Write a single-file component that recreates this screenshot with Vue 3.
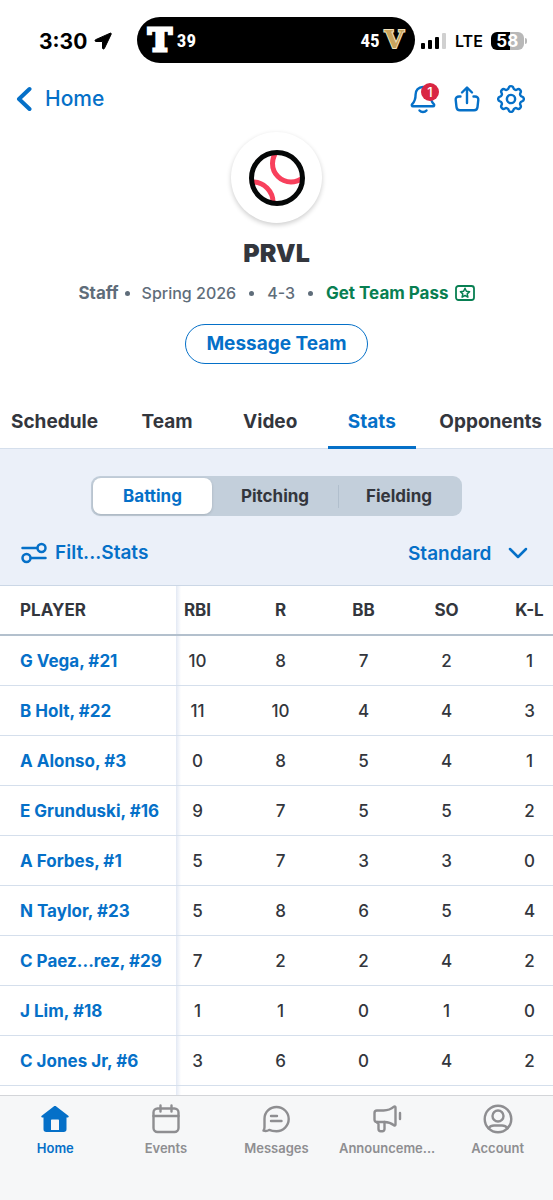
<template>
  <div class="app">
    <div class="status">
      <div class="status-left">
        <span class="clock">3:30</span>
        <svg width="18" height="18" viewBox="0 0 18 18">
          <path d="M16.2 1.2 1.6 7.7c-1 .5-.7 1.8.3 1.8h6.2c.3 0 .4.1.4.4V16c0 1.100 1.400 1.400 1.900.4L17.200 2.200c.3-.7-.3-1.300-1-1z" fill="#000" stroke="#000" stroke-width="1" stroke-linejoin="round" />
        </svg>
      </div>
      <div class="island">
        <div class="score">
          <span class="logo logo-t">T</span>
          <span>39</span>
        </div>
        <div class="score">
          <span>45</span>
          <span class="logo logo-v">V</span>
        </div>
      </div>
      <div class="status-right">
        <svg width="26" height="18" viewBox="0 0 26 18">
          <rect x="0" y="11" width="4" height="6" rx="1" />
          <rect x="7" y="8" width="4" height="9" rx="1" />
          <rect x="14" y="5" width="4" height="12" rx="1" />
          <rect x="21" y="1" width="4" height="16" rx="1" fill="#d0d0d0" />
        </svg>
        <span class="lte">LTE</span>
        <span class="battery">58</span>
      </div>
    </div>

    <header class="topbar">
      <a href="#" class="back">
        <svg width="16" height="26" viewBox="0 0 16 26">
          <path d="M13.500 3 3 13l10.500 10" fill="none" stroke="currentColor" stroke-width="4" stroke-linecap="round" stroke-linejoin="round" />
        </svg>
        Home
      </a>
      <div class="actions">
        <button class="icon-btn" aria-label="Notifications">
          <svg class="line" width="28" height="30" viewBox="0 0 28 30">
            <path d="M14 3C9.500 3 6.600 6.200 6.600 10.500c0 5-1 7.200-3.400 9.600-.8.9-.4 2.200.8 2.200h20c1.200 0 1.600-1.300.8-2.200-2.400-2.400-3.400-4.600-3.400-9.600C21.400 6.200 18.500 3 14 3z" />
            <path d="M10.500 26.500c1.800 2 5.200 2 7 0" />
          </svg>
          <span class="badge">1</span>
        </button>
        <button class="icon-btn" aria-label="Share">
          <svg class="line" width="28" height="30" viewBox="0 0 28 30">
            <path d="M14 19V4M9 8.500 14 3.500l5 5" />
            <path d="M7.500 12.500H6c-2 0-3.500 1.300-3.300 3.300l.8 7.400c.2 1.900 1.500 3.100 3.400 3.100h14.200c1.900 0 3.200-1.200 3.400-3.100l.8-7.400c.2-2-1.300-3.300-3.300-3.300h-1.500" />
          </svg>
        </button>
        <button class="icon-btn" aria-label="Settings">
          <svg width="28" height="30" viewBox="2.200 1.500 19.600 21" fill="none" stroke="currentColor" stroke-width="1.700" stroke-linejoin="round">
            <path d="M10.325 4.317c.426-1.756 2.924-1.756 3.350 0a1.724 1.724 0 0 0 2.573 1.066c1.543-.94 3.310.826 2.370 2.370a1.724 1.724 0 0 0 1.065 2.572c1.756.426 1.756 2.924 0 3.350a1.724 1.724 0 0 0-1.066 2.573c.94 1.543-.826 3.310-2.370 2.370a1.724 1.724 0 0 0-2.572 1.065c-.426 1.756-2.924 1.756-3.350 0a1.724 1.724 0 0 0-2.573-1.066c-1.543.94-3.310-.826-2.370-2.370a1.724 1.724 0 0 0-1.065-2.572c-1.756-.426-1.756-2.924 0-3.350a1.724 1.724 0 0 0 1.066-2.573c-.94-1.543.826-3.310 2.370-2.370 1 .608 2.296.07 2.572-1.065z" />
            <circle cx="12" cy="12" r="2.900" />
          </svg>
        </button>
      </div>
    </header>

    <section class="team">
      <div class="avatar">
        <svg width="56" height="56" viewBox="0 0 56 56">
          <clipPath id="ball"><circle cx="28" cy="28" r="26" /></clipPath>
          <g clip-path="url(#ball)" fill="none" stroke="#f8405c" stroke-width="5">
            <circle cx="42" cy="13.500" r="18.500" />
            <circle cx="3.700" cy="52.300" r="20.300" />
          </g>
          <circle cx="28" cy="28" r="25.500" fill="none" stroke="#050707" stroke-width="5" />
        </svg>
      </div>
      <h1>PRVL</h1>
      <div class="meta">
        <strong>Staff</strong>
        <span class="dot first"></span>
        <span>Spring 2026</span>
        <span class="dot"></span>
        <span>4-3</span>
        <span class="dot"></span>
        <a href="#" class="pass">
          Get Team Pass
          <svg width="20" height="16" viewBox="0 0 20 16" fill="none" stroke="currentColor">
            <rect x="1" y="1" width="18" height="14" rx="2.500" stroke-width="1.800" />
            <path d="m10 3.300 1.400 3 3.200.4-2.400 2.200.7 3.300-2.900-1.700-2.900 1.700.7-3.300-2.400-2.200 3.200-.4z" stroke-width="1.500" stroke-linejoin="round" />
          </svg>
        </a>
      </div>
      <button class="message">Message Team</button>
    </section>

    <nav class="tabs">
      <a
        v-for="tab in tabs"
        :key="tab"
        href="#"
        :class="{ active: tab === activeTab }"
        @click.prevent="activeTab = tab"
      >{{ tab }}</a>
    </nav>

    <section class="panel">
      <div class="segments">
        <button
          v-for="item in segments"
          :key="item"
          :class="{ active: item === activeSegment }"
          @click="activeSegment = item"
        >{{ item }}</button>
      </div>
      <div class="filters">
        <button class="filter">
          <svg width="26" height="22" viewBox="0 0 26 22" fill="none" stroke="currentColor" stroke-width="2.500" stroke-linecap="round">
            <path d="M1.500 6h14.500M10 16h14.500" />
            <circle cx="20.500" cy="6" r="4" />
            <circle cx="5.500" cy="16" r="4" />
          </svg>
          Filt...Stats
        </button>
        <label class="view">
          <select v-model="view" aria-label="Stat view">
            <option>Standard</option>
          </select>
          <svg width="20" height="12" viewBox="0 0 20 12">
            <path d="m2 2 8 8 8-8" fill="none" stroke="currentColor" stroke-width="2.500" stroke-linecap="round" stroke-linejoin="round" />
          </svg>
        </label>
      </div>
    </section>

    <main class="stats">
      <table>
        <thead>
          <tr>
            <th scope="col">PLAYER</th>
            <th v-for="col in columns" :key="col" scope="col">{{ col }}</th>
          </tr>
        </thead>
        <tbody>
          <tr v-for="player in players" :key="player.name">
            <th scope="row"><a href="#">{{ player.name }}</a></th>
            <td v-for="(value, i) in player.stats" :key="i">{{ value }}</td>
          </tr>
          <tr aria-hidden="true">
            <th></th>
            <td v-for="col in columns" :key="col"></td>
          </tr>
        </tbody>
      </table>
    </main>

    <nav class="bottom">
      <a href="#" class="active">
        <svg width="30" height="30" viewBox="0 0 30 30">
          <path fill="currentColor" fill-rule="evenodd" d="M13.700 2.500c.8-.6 1.800-.6 2.600 0l12 9.200c.8.700.4 1.800-.6 1.800h-1.200v11.700c0 1.800-1 2.800-2.800 2.800H6.300c-1.800 0-2.800-1-2.800-2.800V13.500H2.300c-1 0-1.400-1.100-.6-1.800zM12 15.500c-.6 0-1 .4-1 1V26h8v-9.500c0-.6-.4-1-1-1z" />
        </svg>
        <span>Home</span>
      </a>
      <a href="#">
        <svg class="line" width="30" height="30" viewBox="0 0 30 30">
          <rect x="2.500" y="4.500" width="25" height="23.500" rx="4" />
          <path d="M2.500 12h25M9.500 1.500v6M20.500 1.500v6" />
        </svg>
        <span>Events</span>
      </a>
      <a href="#">
        <svg class="line" width="30" height="30" viewBox="0 0 30 30">
          <path d="M15.500 3C8.800 3 3.500 8.200 3.500 14.700v8.500c0 1.500-.3 2.300-1 3.500 1.800.5 4.200.3 5.700-.8 2.100 1 4.700 1.300 7.300 1.300 6.800 0 12.200-5.500 12.200-12.200S22.300 3 15.500 3z" />
          <path d="M10 12h6M10 17h10.500" />
        </svg>
        <span>Messages</span>
      </a>
      <a href="#">
        <svg class="line" width="30" height="30" viewBox="0 0 30 30">
          <path d="M5 6.500h6.500c4.500 0 8-1.600 10.500-3.800.7-.6 1.500-.2 1.500.7v17.200c0 .9-.8 1.300-1.500.7-2.500-2-5.500-3.300-9.500-3.300H5c-1.500 0-2.500-.9-2.500-2.400V9c0-1.500 1-2.500 2.500-2.500z" />
          <path d="M5 18v.5l1.500 1.500v5c0 1.300.8 2.200 2.200 2.200h1.600c1.400 0 2.200-.9 2.200-2.200v-7" />
          <path d="M28 9v6" />
        </svg>
        <span>Announceme...</span>
      </a>
      <a href="#">
        <svg class="line" width="30" height="30" viewBox="0 0 30 30">
          <circle cx="15" cy="15" r="13.300" />
          <circle cx="15" cy="12" r="5.500" />
          <path d="M5.500 24.300c1.500-2 3.200-2.800 5.500-2.800h8c2.300 0 4 .8 5.500 2.800" />
        </svg>
        <span>Account</span>
      </a>
    </nav>
  </div>
</template>

<script setup>
import { ref } from 'vue'

const tabs = ['Schedule', 'Team', 'Video', 'Stats', 'Opponents']
const activeTab = ref('Stats')

const segments = ['Batting', 'Pitching', 'Fielding']
const activeSegment = ref('Batting')

const view = ref('Standard')

const columns = ['RBI', 'R', 'BB', 'SO', 'K-L']
const players = ref([
  { name: 'G Vega, #21', stats: [10, 8, 7, 2, 1] },
  { name: 'B Holt, #22', stats: [11, 10, 4, 4, 3] },
  { name: 'A Alonso, #3', stats: [0, 8, 5, 4, 1] },
  { name: 'E Grunduski, #16', stats: [9, 7, 5, 5, 2] },
  { name: 'A Forbes, #1', stats: [5, 7, 3, 3, 0] },
  { name: 'N Taylor, #23', stats: [5, 8, 6, 5, 4] },
  { name: 'C Paez...rez, #29', stats: [7, 2, 2, 4, 2] },
  { name: 'J Lim, #18', stats: [1, 1, 0, 1, 0] },
  { name: 'C Jones Jr, #6', stats: [3, 6, 0, 4, 2] }
])
</script>

<style>
body {
  margin: 0;
  background: #fff;
}
</style>

<style scoped>
* {
  box-sizing: border-box;
}

.app {
  display: flex;
  flex-direction: column;
  height: 100vh;
  overflow: hidden;
  background: #fff;
  color: #33363d;
  font-family: Inter, 'Liberation Sans', sans-serif;
}

a {
  color: #0570c8;
  text-decoration: none;
}

button,
select {
  margin: 0;
  padding: 0;
  border: none;
  background: none;
  color: #0570c8;
  font-family: inherit;
  cursor: pointer;
}

svg {
  display: block;
  flex: none;
}

.line {
  fill: none;
  stroke: currentColor;
  stroke-width: 2.4;
  stroke-linecap: round;
  stroke-linejoin: round;
}

/* status bar */
.status {
  display: grid;
  grid-template-columns: 137px 1fr 138px;
  align-items: center;
  padding-top: 17px;
  color: #000;
}

.status-left {
  display: flex;
  align-items: center;
  gap: 7px;
  padding: 2px 0 0 39px;
}

.clock {
  font-size: 21px;
  font-weight: 700;
}

.island {
  display: flex;
  align-items: center;
  justify-content: space-between;
  height: 46px;
  padding: 0 11px;
  border-radius: 23px;
  background: #000;
  color: #fff;
}

.score {
  display: flex;
  align-items: center;
  gap: 5px;
  font-family: 'Roboto Condensed', Roboto, sans-serif;
  font-size: 19px;
  font-weight: 700;
}

.logo {
  font-family: 'DejaVu Serif', serif;
  font-weight: 700;
  line-height: 32px;
}

.logo-t {
  font-size: 32px;
  -webkit-text-stroke: 3px #fff;
}

.logo-v {
  color: #c9a45c;
  font-size: 25px;
  -webkit-text-stroke: 2px #f3e3bd;
  paint-order: stroke fill;
}

.status-right {
  display: flex;
  align-items: center;
  gap: 8px;
  padding: 2px 0 0 6px;
}

.lte {
  font-size: 16px;
  font-weight: 600;
}

.battery {
  position: relative;
  width: 33px;
  border-radius: 6px;
  background: linear-gradient(to right, #000 58%, #b8b8b8 58%);
  color: #fff;
  font-size: 17px;
  font-weight: 700;
  line-height: 18px;
  text-align: center;
}

.battery::after {
  content: '';
  position: absolute;
  top: 6px;
  right: -3px;
  width: 2px;
  height: 6px;
  border-radius: 0 2px 2px 0;
  background: #b8b8b8;
}

/* top bar */
.topbar {
  display: flex;
  align-items: center;
  justify-content: space-between;
  padding: 18px 28px 15px 16px;
}

.back {
  display: flex;
  align-items: center;
  gap: 13px;
  font-size: 21px;
  font-weight: 500;
  line-height: 36px;
}

.actions {
  display: flex;
  gap: 16px;
}

.icon-btn {
  position: relative;
}

.badge {
  position: absolute;
  top: -1px;
  right: -2px;
  width: 18px;
  border-radius: 9px;
  background: #d92643;
  color: #fff;
  font-size: 13px;
  font-weight: 500;
  line-height: 18px;
  text-align: center;
}

/* team */
.team {
  display: flex;
  flex-direction: column;
  align-items: center;
}

.avatar {
  display: flex;
  align-items: center;
  justify-content: center;
  width: 91px;
  height: 91px;
  border-radius: 50%;
  box-shadow: 0 2px 5px rgba(0, 0, 0, 0.2);
}

h1 {
  margin: 15px 0 13px;
  font-size: 25px;
  font-weight: 900;
  line-height: 30px;
}

.meta {
  display: flex;
  align-items: center;
  color: #5f6d7a;
  font-size: 16px;
  font-weight: 500;
  line-height: 24px;
}

.meta strong {
  font-size: 17px;
}

.dot {
  width: 5px;
  height: 5px;
  margin: 0 13px;
  border-radius: 50%;
  background: #5f6d7a;
}

.dot.first {
  margin: 0 12px 0 6px;
}

.pass {
  display: flex;
  align-items: center;
  gap: 6px;
  color: #087f52;
  font-size: 17px;
  font-weight: 700;
}

.message {
  margin-top: 19px;
  padding: 0 20px;
  border: 1px solid #0570c8;
  border-radius: 20px;
  font-size: 19px;
  font-weight: 700;
  line-height: 38px;
}

/* tabs */
.tabs {
  display: flex;
  justify-content: space-between;
  margin-top: 34px;
  border-bottom: 1px solid #d5dfec;
}

.tabs a {
  padding: 0 20px;
  margin-bottom: -1px;
  border-bottom: 3px solid transparent;
  color: #33363d;
  font-size: 19px;
  font-weight: 700;
  line-height: 48px;
}

.tabs a:first-child {
  padding: 0 13px 0 11px;
}

.tabs a:last-child {
  padding: 0 11px 0 13px;
}

.tabs a.active {
  border-color: #0570c8;
  color: #0570c8;
}

/* filters */
.panel {
  display: flex;
  flex-direction: column;
  align-items: center;
  padding-top: 27px;
  border-bottom: 1px solid #cbd7e6;
  background: #ebf0f9;
}

.segments {
  display: grid;
  grid-template-columns: 119fr 127fr 122fr;
  width: 67%;
  padding: 2px;
  border-radius: 9px;
  background: #c3cfdb;
}

.segments button {
  position: relative;
  border-radius: 8px;
  color: #33363d;
  font-size: 17px;
  font-weight: 700;
  line-height: 36px;
}

.segments button:last-child::before {
  content: '';
  position: absolute;
  top: 7px;
  left: 0;
  width: 1px;
  height: 23px;
  background: #b1bfcd;
}

.segments .active {
  background: #fff;
  box-shadow: 0 1px 3px rgba(0, 0, 0, 0.15);
  color: #0570c8;
}

.filters {
  display: flex;
  justify-content: space-between;
  align-self: stretch;
  padding: 18px 25px 13px 21px;
}

.filter,
.view {
  display: flex;
  align-items: center;
  color: #0570c8;
  font-size: 19px;
  font-weight: 600;
  line-height: 38px;
}

.filter {
  gap: 8px;
}

.view {
  gap: 16px;
}

.view select {
  appearance: none;
  font-size: 19px;
  font-weight: 600;
}

/* stats table */
.stats {
  flex: 1;
  min-height: 0;
  overflow: hidden;
}

table {
  width: 100%;
  min-width: 571px;
  border-collapse: separate;
  border-spacing: 0;
  table-layout: fixed;
}

th,
td {
  height: 50px;
  padding: 0;
  border-bottom: 1px solid #d5dfec;
  text-align: center;
}

th {
  font-size: 17px;
  font-weight: 700;
}

td {
  font-size: 17px;
  font-weight: 500;
}

thead th {
  width: 83px;
  border-bottom: 2px solid #b3c0cd;
}

th:first-child {
  width: 176px;
  padding-left: 20px;
  text-align: left;
}

th:nth-child(2),
td:nth-child(2) {
  width: 63px;
  padding-right: 20px;
  background: linear-gradient(to right, #e3e9f4, #fff 5px);
}

/* bottom bar */
.bottom {
  display: grid;
  grid-template-columns: repeat(5, 1fr);
  height: 105px;
  padding-top: 8px;
  border-top: 1px solid #d3d5d9;
  background: #f6f7f8;
}

.bottom a {
  display: flex;
  flex-direction: column;
  align-items: center;
  gap: 5px;
  color: #8e8e91;
  font-size: 13px;
  font-weight: 600;
  line-height: 18px;
}

.bottom a.active {
  color: #0570c8;
}
</style>
